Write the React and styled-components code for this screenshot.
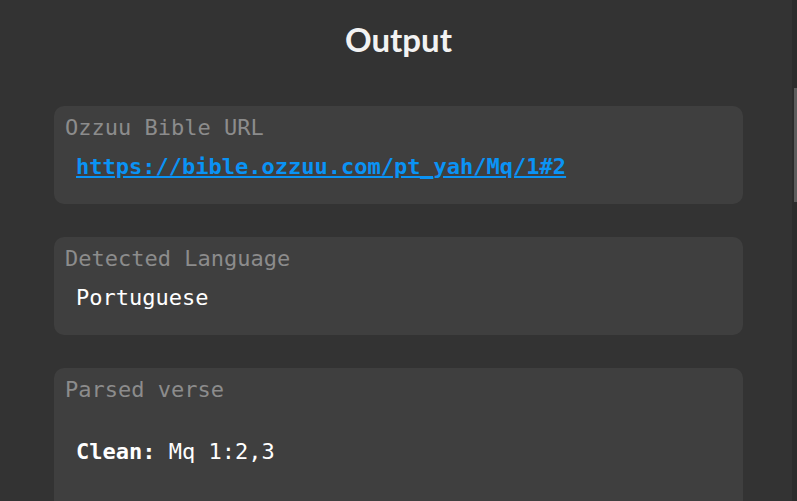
import React from 'react'
import styled, { createGlobalStyle } from 'styled-components'

const GlobalStyle = createGlobalStyle`
html, body {
  margin: 0;
  padding: 0;
  background: #333333;
  overflow: hidden;
}
`

const App = () => {
    return (
        <Page>
            <GlobalStyle />
            <Title>Output</Title>
            <List>
                <Card>
                    <Label>Ozzuu Bible URL</Label>
                    <Value>
                        <Link href="#">https://bible.ozzuu.com/pt_yah/Mq/1#2</Link>
                    </Value>
                </Card>
                <Card>
                    <Label>Detected Language</Label>
                    <Value>Portuguese</Value>
                </Card>
                <Card tall>
                    <Label>Parsed verse</Label>
                    <Value spaced>
                        <b>Clean:</b> Mq 1:2,3
                    </Value>
                </Card>
            </List>
            <ScrollTrack>
                <ScrollThumb />
            </ScrollTrack>
        </Page>
    )
}

export default App

const Page = styled.div`
position: relative;
height: 501px;
overflow: hidden;
background: #333333;
padding-top: 19px;
box-sizing: border-box;
`

const Title = styled.h1`
margin: 0;
text-align: center;
color: #f2f2f2;
font-family: Lato, "Open Sans", sans-serif;
font-weight: 700;
font-size: 33px;
line-height: 40px;
`

const List = styled.div`
display: flex;
flex-direction: column;
gap: 33px;
width: 689px;
margin: 47px auto 0;
`

const Card = styled.div`
background: #3f3f3f;
border-radius: 10px;
padding: 9px 11px 24px;
min-height: ${p => (p.tall ? '160px' : 'auto')};
font-family: "DejaVu Sans Mono", monospace;
font-size: 22px;
line-height: 26px;
`

const Label = styled.div`
color: #8c8c8c;
`

const Value = styled.div`
color: #ffffff;
padding-left: 11px;
margin-top: ${p => (p.spaced ? '36px' : '13px')};
b {
  font-weight: 700;
}
`

const Link = styled.a`
color: #0a93f5;
font-weight: 700;
text-decoration: underline;
`

const ScrollTrack = styled.div`
position: absolute;
top: 0;
right: 0;
width: 5px;
height: 100%;
background: #2c2c2c;
`

const ScrollThumb = styled.div`
margin-top: 88px;
margin-left: 2px;
width: 3px;
height: 114px;
background: #5c5c5c;
`
